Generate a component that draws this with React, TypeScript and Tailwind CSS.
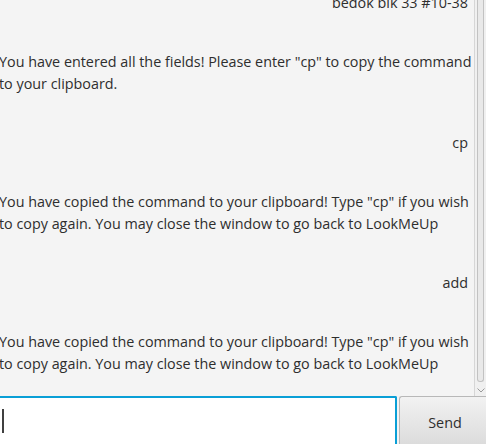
import React from "react";

const Right = ({ text }: { text: string }) => (
  <div className="h-[22px] leading-[22px] text-right whitespace-nowrap">{text}</div>
);

const Left = ({ l1, l2 }: { l1: string; l2: string }) => (
  <div className="leading-[22px] whitespace-nowrap -ml-[1px]">
    <div>{l1}</div>
    <div>{l2}</div>
  </div>
);

export default function App() {
  return (
    <div
      className="w-[486px] h-[444px] bg-[#f4f4f4] flex flex-col overflow-hidden text-[#2e2e2e] text-[14.35px]"
      style={{ fontFamily: '"Open Sans", "Noto Sans", sans-serif' }}
    >
      <div className="flex flex-1 min-h-0">
        <div className="flex-1 overflow-hidden pr-[6px]">
          <div className="flex flex-col gap-[37px] -mt-[8px]">
            <Right text="bedok blk 33 #10-38" />
            <Left
              l1={'You have entered all the fields! Please enter "cp" to copy the command'}
              l2="to your clipboard."
            />
            <Right text="cp" />
            <Left
              l1={'You have copied the command to your clipboard! Type "cp" if you wish'}
              l2="to copy again. You may close the window to go back to LookMeUp"
            />
            <Right text="add" />
            <Left
              l1={'You have copied the command to your clipboard! Type "cp" if you wish'}
              l2="to copy again. You may close the window to go back to LookMeUp"
            />
          </div>
        </div>
        <div className="w-[12px] flex flex-col border-l border-[#d6d6d6] bg-[#f0f0f0]">
          <div className="flex-1 mx-[2px] mt-0 mb-[2px] rounded-b-[3px] border border-t-0 border-[#c2c2c2] bg-[#e9e9e9]" />
          <div className="h-[12px] flex items-center justify-center">
            <svg width="8" height="5" viewBox="0 0 8 5">
              <path d="M0.5 0.5 L4 4 L7.5 0.5" stroke="#9a9a9a" strokeWidth="1" fill="none" />
            </svg>
          </div>
        </div>
      </div>
      <div className="flex h-[48px] gap-[2px]">
        <div className="flex-1 bg-white border-t-2 border-r-2 border-[#0a9fd6] rounded-tr-[2px] flex items-center pl-[2px]">
          <div className="w-[2px] h-[24px] bg-[#404040]" />
        </div>
        <div className="w-[87px] border-t border-l border-[#b8b8b8] rounded-tl-[3px] bg-gradient-to-b from-[#f2f2f2] to-[#dcdcdc] flex items-center justify-center pt-[4px] pl-[4px]">
          <span>Send</span>
        </div>
      </div>
    </div>
  );
}
